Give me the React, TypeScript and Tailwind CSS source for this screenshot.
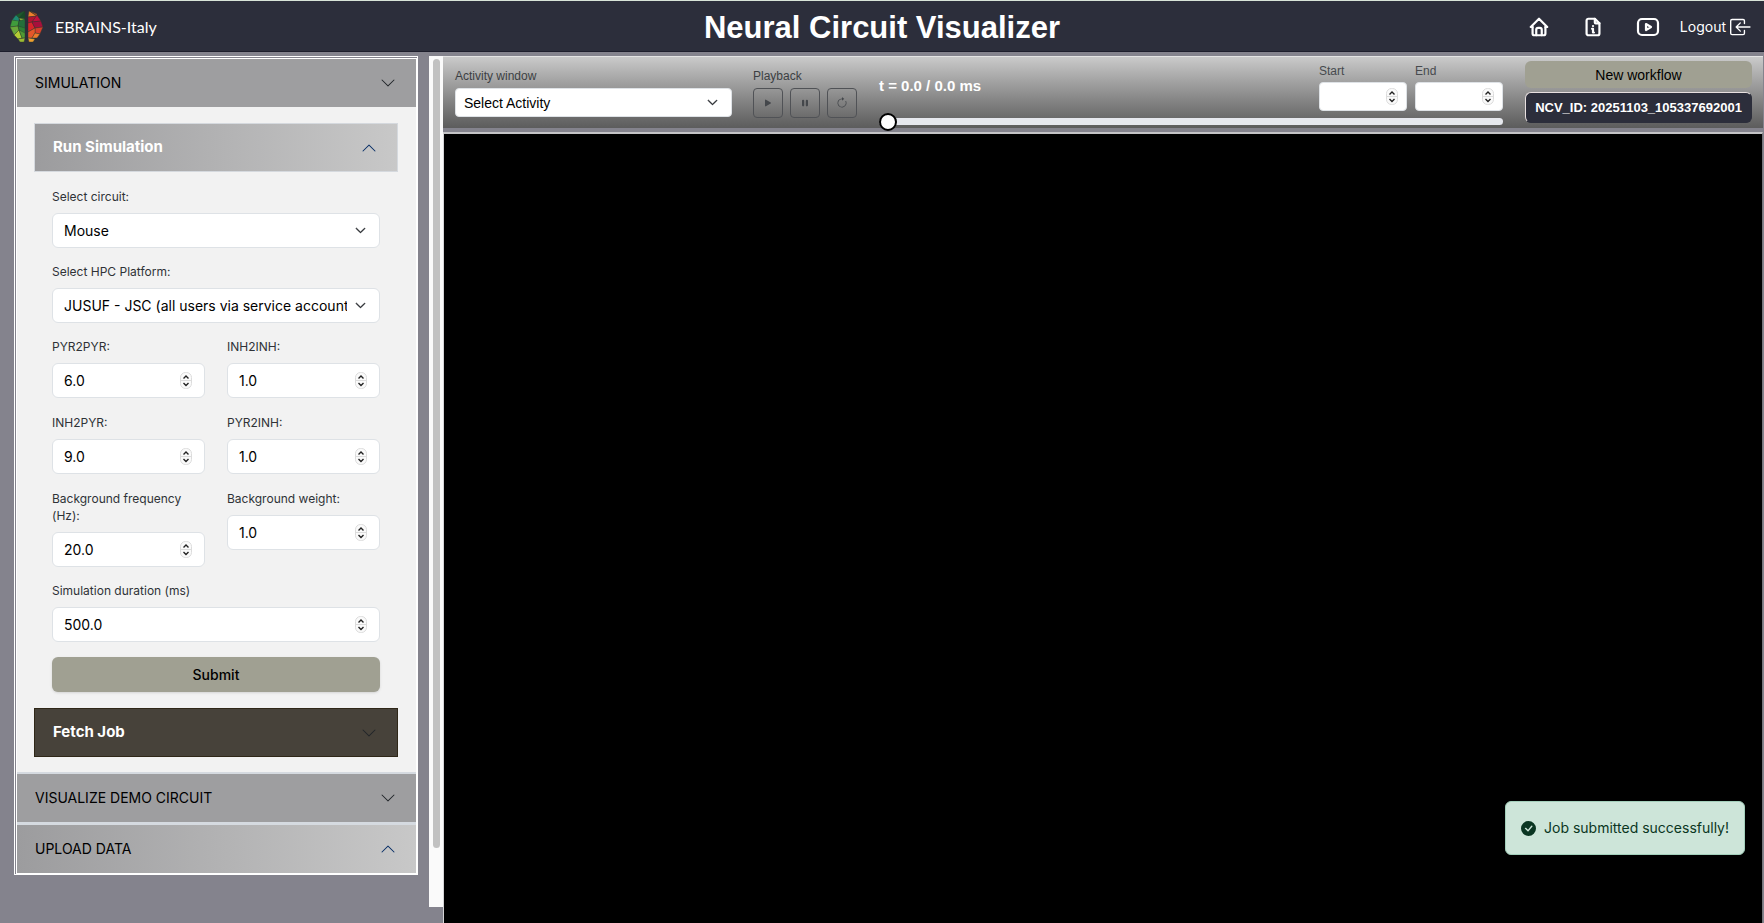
import React, { useId, useState } from 'react';
import {
  BsArrowClockwise,
  BsBoxArrowInLeft,
  BsCheckCircleFill,
  BsChevronDown,
  BsChevronUp,
  BsPauseFill,
  BsPlayFill,
} from 'react-icons/bs';
import { TbBrandYoutube, TbFileInfo, TbHome } from 'react-icons/tb';

const BRAIN = [
  { points: '14,1 6,5 9,8 15,7', fill: '#1c5a2c' },
  { points: '6,5 2,10 9,12 9,8', fill: '#1e8a72' },
  { points: '15,1 15,9 9,8', fill: '#174a26' },
  { points: '9,8 15,9 12,14', fill: '#8fb83a' },
  { points: '2,10 0,17 8,16 9,11', fill: '#3f9c3c' },
  { points: '9,11 8,16 15,19 15,9', fill: '#256e3a' },
  { points: '0,17 4,25 9,20 8,16', fill: '#6aa83a' },
  { points: '8,16 9,20 15,24 15,18', fill: '#2f7f33' },
  { points: '4,25 9,20 12,28 8,29', fill: '#b4cc35' },
  { points: '9,20 15,23 15,28 12,28', fill: '#4f9a34' },
  { points: '8,29 15,28 14,32 10,32', fill: '#9dbb33' },
  { points: '19,1 18,7 27,6', fill: '#f0802c' },
  { points: '20,1 27,4 27,6', fill: '#c8501f' },
  { points: '18,7 27,6 22,12 18,13', fill: '#b01530' },
  { points: '27,5 31,11 22,12', fill: '#c4103f' },
  { points: '18,13 22,12 25,18 18,22', fill: '#d8252b' },
  { points: '22,12 31,11 33,17 25,18', fill: '#a80f3c' },
  { points: '25,18 33,17 30,24 25,23', fill: '#d6402c' },
  { points: '18,22 25,18 25,23 22,28 18,28', fill: '#e4572a' },
  { points: '25,23 30,24 27,28 22,28', fill: '#ef7a2a' },
  { points: '18,28 25,29 23,32 19,32', fill: '#f0a030' },
];

function BrainLogo() {
  return (
    <svg width="34" height="34" viewBox="0 0 34 34" aria-hidden="true">
      {BRAIN.map((p) => (
        <polygon key={p.points} points={p.points} fill={p.fill} stroke="#2c3a2c" strokeWidth="0.4" />
      ))}
    </svg>
  );
}

function Spinner() {
  return (
    <svg width="12" height="18" viewBox="0 0 12 18" fill="none" className="shrink-0" aria-hidden="true">
      <rect x="0.5" y="0.5" width="11" height="16" rx="5" fill="#fafafa" stroke="#dcdcdc" />
      <path d="M0.5 8.500h11" stroke="#dcdcdc" />
      <path d="M3.500 6.500L6 4l2.500 2.500M3.500 11L6 13.500 8.500 11" stroke="#222" strokeWidth="1.400" />
    </svg>
  );
}

function NumberField({ label, value }: { label: string; value: string }) {
  const id = useId();
  return (
    <div className="min-w-0">
      <label htmlFor={id} className="block py-2 text-xs leading-[17px] text-[#2f3237]">
        {label}
      </label>
      <div className="flex h-[35px] items-center rounded-md border border-[#dee2e6] bg-white pr-3 pl-[11px]">
        <input
          id={id}
          type="number"
          step="0.1"
          defaultValue={value}
          className="w-full min-w-0 flex-1 bg-transparent text-sm text-black outline-none [appearance:textfield] [&::-webkit-inner-spin-button]:appearance-none"
        />
        <Spinner />
      </div>
    </div>
  );
}

function SelectField({ label, options }: { label: string; options: string[] }) {
  const id = useId();
  return (
    <div>
      <label htmlFor={id} className="block py-2 text-xs leading-[17px] text-[#2f3237]">
        {label}
      </label>
      <div className="relative">
        <select
          id={id}
          className="h-[35px] w-full appearance-none rounded-md border border-[#dee2e6] bg-white pr-8 pl-[11px] text-sm text-black"
        >
          {options.map((o) => (
            <option key={o}>{o}</option>
          ))}
        </select>
        <BsChevronDown
          size={11}
          strokeWidth={1}
          className="pointer-events-none absolute top-3 right-[14px] text-[#212529]"
        />
      </div>
    </div>
  );
}

function SectionHeader({ title, open }: { title: string; open?: boolean }) {
  return (
    <button
      type="button"
      aria-expanded={!!open}
      className={
        'flex h-12 w-full items-center justify-between pr-5 pl-[18px] text-left text-sm text-black ' +
        (open ? 'bg-linear-to-r from-[#9c9c9e] to-[#c8c8c8]' : 'bg-[#9e9ea0]')
      }
    >
      {title}
      {open ? <BsChevronUp size={16} className="text-[#052c65]" /> : <BsChevronDown size={16} className="text-[#212529]" />}
    </button>
  );
}

function Sidebar() {
  return (
    <aside className="flex w-[443px] shrink-0 items-start pl-[14px] font-['Inter','Liberation_Sans',sans-serif]">
      <div className="mr-[11px] min-w-0 flex-1 border-t-3 border-r-2 border-b-2 border-l-3 border-white [border-style:double_solid_solid_double]">
        <SectionHeader title="SIMULATION" />
        <div className="bg-[#f2f2f2] pt-4 pr-[18px] pb-[15px] pl-[17px]">
          <button
            type="button"
            aria-expanded="true"
            className="flex h-[49px] w-full items-center justify-between border border-[#d5d9de] bg-linear-to-r from-[#9c9c9e] to-[#c8c8c8] pr-5 pl-[18px] text-[15px] font-bold text-white"
          >
            Run Simulation
            <BsChevronUp size={16} className="text-[#052c65]" />
          </button>
          <form className="px-[18px] pt-2 pb-4" onSubmit={(e) => e.preventDefault()}>
            <div className="flex flex-col gap-[7px]">
              <SelectField label="Select circuit:" options={['Mouse']} />
              <SelectField
                label="Select HPC Platform:"
                options={['JUSUF - JSC (all users via service account)']}
              />
              <div className="grid grid-cols-2 gap-x-[22px] gap-y-2">
                <NumberField label="PYR2PYR:" value="6.0" />
                <NumberField label="INH2INH:" value="1.0" />
                <NumberField label="INH2PYR:" value="9.0" />
                <NumberField label="PYR2INH:" value="1.0" />
                <NumberField label="Background frequency (Hz):" value="20.0" />
                <NumberField label="Background weight:" value="1.0" />
              </div>
              <NumberField label="Simulation duration (ms)" value="500.0" />
            </div>
            <button
              type="submit"
              className="mt-[15px] h-[35px] w-full rounded-md bg-[#a0a092] text-sm font-medium text-black shadow"
            >
              Submit
            </button>
          </form>
          <button
            type="button"
            aria-expanded="false"
            className="flex h-[49px] w-full items-center justify-between border border-[#2f2718] bg-[#47423a] pr-5 pl-[18px] text-[15px] font-bold text-white"
          >
            Fetch Job
            <BsChevronDown size={16} className="text-[#212529]" />
          </button>
        </div>
        <div className="border-t-2 border-[#d5dae0]">
          <SectionHeader title="VISUALIZE DEMO CIRCUIT" />
        </div>
        <div className="border-t-3 border-[#d5dae0]">
          <SectionHeader title="UPLOAD DATA" open />
        </div>
      </div>
      <div className="mb-4 flex w-[14px] justify-center self-stretch bg-[#fafafa] pt-[3px]">
        <div className="h-[93%] w-[7px] rounded-full bg-[#c1c1c1]" />
      </div>
    </aside>
  );
}

function RangeField({ label }: { label: string }) {
  const id = useId();
  return (
    <div className="w-[88px]">
      <label htmlFor={id} className="block text-xs leading-4 text-[#474a4e]">
        {label}
      </label>
      <div className="mt-[3px] flex h-[29px] items-center rounded-sm border border-[#dee2e6] bg-white pr-2 pl-2">
        <input
          id={id}
          type="number"
          className="w-full min-w-0 flex-1 bg-transparent text-sm outline-none [appearance:textfield] [&::-webkit-inner-spin-button]:appearance-none"
        />
        <Spinner />
      </div>
    </div>
  );
}

const playback = [
  { name: 'Play', icon: <BsPlayFill size={12} /> },
  { name: 'Pause', icon: <BsPauseFill size={12} /> },
  { name: 'Restart', icon: <BsArrowClockwise size={12} /> },
];

function Toolbar() {
  const [time, setTime] = useState(0);
  return (
    <div className="relative z-10 flex h-[72px] items-start border-t border-[#e4e4e4] bg-linear-to-b from-[#cacaca] to-[#5c5c5c] pr-[11px] pl-3">
      <div className="w-[277px] shrink-0 pt-[11px]">
        <label htmlFor="activity" className="block text-xs leading-4 text-[#3c3f43]">
          Activity window
        </label>
        <div className="relative mt-1">
          <select
            id="activity"
            className="h-[29px] w-full appearance-none rounded-sm border border-[#dee2e6] bg-white pr-8 pl-2 text-sm text-black"
          >
            <option>Select Activity</option>
          </select>
          <BsChevronDown
            size={11}
            strokeWidth={1}
            className="pointer-events-none absolute top-[9px] right-[14px] text-[#212529]"
          />
        </div>
      </div>
      <div className="ml-[21px] shrink-0 pt-[11px]">
        <div className="text-xs leading-4 text-[#3c3f43]">Playback</div>
        <div className="mt-1 flex gap-[7px]">
          {playback.map((b) => (
            <button
              key={b.name}
              type="button"
              aria-label={b.name}
              className="flex size-[30px] items-center justify-center rounded-sm border border-[#505256] text-[#44474b]"
            >
              {b.icon}
            </button>
          ))}
        </div>
      </div>
      <div className="ml-[22px] min-w-0 flex-1 pt-[6px]">
        <div className="flex items-start">
          <output className="mt-[11px] flex-1 text-[15px] leading-6 font-bold text-white">
            t = {time.toFixed(1)} / 0.0 ms
          </output>
          <div className="flex gap-2">
            <RangeField label="Start" />
            <RangeField label="End" />
          </div>
        </div>
        <input
          type="range"
          aria-label="Time"
          min={0}
          max={0}
          value={time}
          onChange={(e) => setTime(Number(e.target.value))}
          className="mt-[7px] block h-[7px] w-full appearance-none rounded-full bg-[#e6e8ee] [&::-webkit-slider-thumb]:size-[18px] [&::-webkit-slider-thumb]:appearance-none [&::-webkit-slider-thumb]:rounded-full [&::-webkit-slider-thumb]:border-2 [&::-webkit-slider-thumb]:border-black [&::-webkit-slider-thumb]:bg-white"
        />
      </div>
      <div className="ml-[22px] w-[227px] shrink-0 pt-1">
        <button type="button" className="block h-[27px] w-full rounded-md bg-[#a0a092] text-sm text-black">
          New workflow
        </button>
        <div className="mt-1 flex h-[31px] items-center justify-center rounded-md border border-t-[#e8e0e0] border-r-[#2c2e3b] border-b-[#2c2e3b] border-l-[#e8e0e0] bg-[#2c2e3b] text-[13px] font-bold text-white">
          NCV_ID: 20251103_105337692001
        </div>
      </div>
    </div>
  );
}

function Header() {
  return (
    <header className="grid h-[52px] shrink-0 grid-cols-[1fr_auto_1fr] items-center border-t border-b border-t-[#d8e4d8] border-b-[#1d1e2c] bg-[#2c2e3b] pt-0.5 text-white">
      <div className="flex items-center gap-[11px] pl-[10px] font-['Lato',sans-serif]">
        <BrainLogo />
        <span className="text-base">EBRAINS-Italy</span>
      </div>
      <h1 className="text-[31px] leading-none font-bold">Neural Circuit Visualizer</h1>
      <nav className="flex items-center justify-end pr-3">
        <a href="#home" aria-label="Home" className="mr-8">
          <TbHome size={22} strokeWidth={2.4} />
        </a>
        <a href="#docs" aria-label="Documentation" className="mr-8">
          <TbFileInfo size={22} strokeWidth={2.4} />
        </a>
        <a href="#videos" aria-label="Videos" className="mr-5">
          <TbBrandYoutube size={24} strokeWidth={2.2} />
        </a>
        <a href="#logout" className="flex items-center gap-1 font-['Inter',sans-serif] text-sm">
          Logout
          <BsBoxArrowInLeft size={22} />
        </a>
      </nav>
    </header>
  );
}

export default function App() {
  return (
    <div className="flex min-h-screen flex-col bg-[#84838d] font-['Liberation_Sans',Arial,sans-serif]">
      <Header />
      <div className="flex flex-1 pt-1">
        <Sidebar />
        <main className="flex min-w-0 flex-1 flex-col pr-px">
          <Toolbar />
          <div className="relative mt-1 flex-1 border-x border-t-2 border-t-[#c4c4c6] border-r-[#77777c] border-l-[#d4d4d6] bg-black">
            <div
              role="status"
              className="absolute right-[17px] bottom-[68px] flex h-[54px] items-center gap-2 rounded-md border border-[#a3cfbb] bg-[#cde5d9] px-[15px] font-['Inter',sans-serif] text-sm text-[#0a3622]"
            >
              <BsCheckCircleFill size={15} />
              Job submitted successfully!
            </div>
          </div>
        </main>
      </div>
    </div>
  );
}
